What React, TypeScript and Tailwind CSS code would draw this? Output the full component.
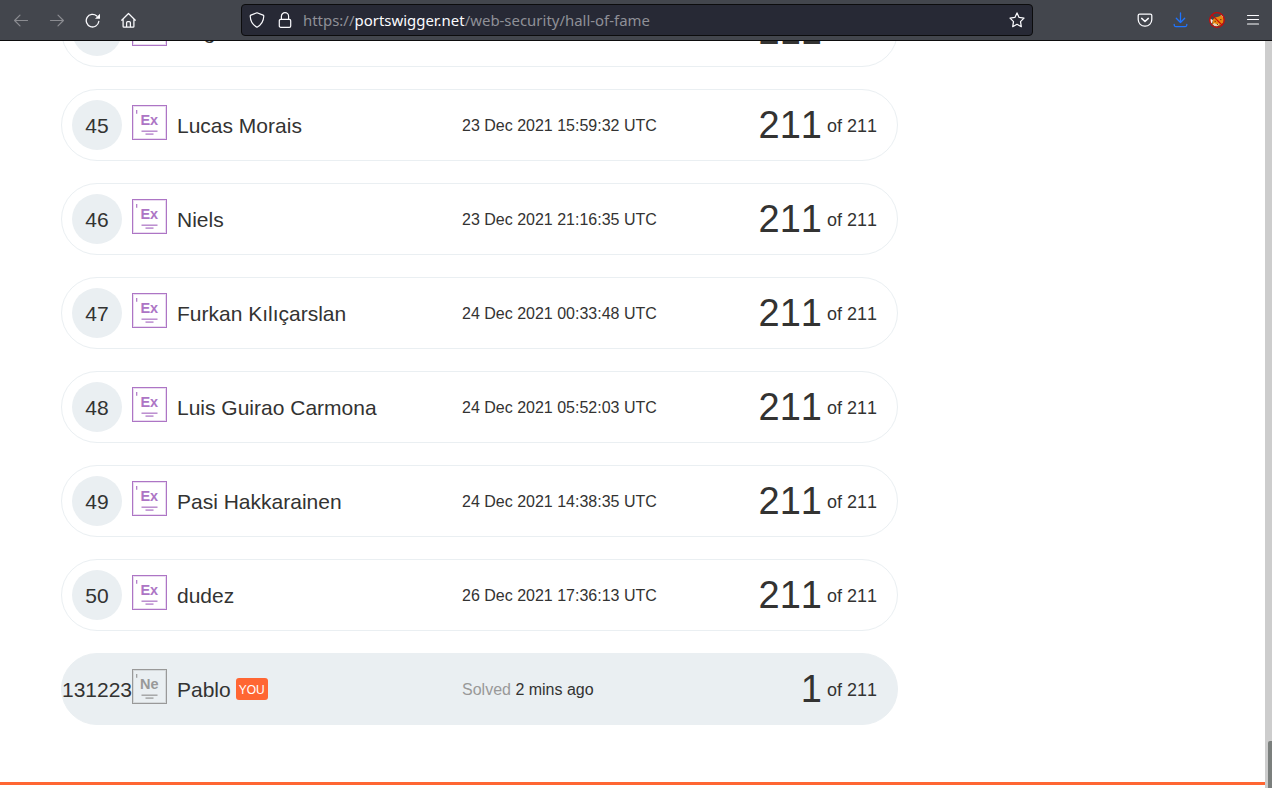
import React from "react";

type Entry = {
  rank: number;
  name: string;
  time: string;
  score: number;
  level: "Ex" | "Ne";
  you?: boolean;
};

const entries: Entry[] = [
  { rank: 44, name: "Reg", time: "23 Dec 2021 12:20:10 UTC", score: 211, level: "Ex" },
  { rank: 45, name: "Lucas Morais", time: "23 Dec 2021 15:59:32 UTC", score: 211, level: "Ex" },
  { rank: 46, name: "Niels", time: "23 Dec 2021 21:16:35 UTC", score: 211, level: "Ex" },
  { rank: 47, name: "Furkan Kılıçarslan", time: "24 Dec 2021 00:33:48 UTC", score: 211, level: "Ex" },
  { rank: 48, name: "Luis Guirao Carmona", time: "24 Dec 2021 05:52:03 UTC", score: 211, level: "Ex" },
  { rank: 49, name: "Pasi Hakkarainen", time: "24 Dec 2021 14:38:35 UTC", score: 211, level: "Ex" },
  { rank: 50, name: "dudez", time: "26 Dec 2021 17:36:13 UTC", score: 211, level: "Ex" },
  { rank: 131223, name: "Pablo", time: "2 mins ago", score: 1, level: "Ne", you: true },
];

function LevelBadge({ level }: { level: "Ex" | "Ne" }) {
  const color = level === "Ex" ? "#ad75c5" : "#999999";
  return (
    <svg width="35" height="35" viewBox="0 0 35 35" fill="none" className="block shrink-0">
      <rect x="0.5" y="0.5" width="34" height="34" stroke={color} />
      <rect x="1.5" y="1.5" width="32" height="32" stroke={color} strokeOpacity="0.25" />
      <path d="M4.7 5v3.7" stroke={color} strokeWidth="1.2" />
      <text x="17.3" y="20" textAnchor="middle" fontSize="14.5" fontWeight="700" fill={color}>
        {level}
      </text>
      <path d="M9.5 26.2h16" stroke={color} strokeWidth="1.4" strokeOpacity="0.9" />
      <path d="M13.5 29.1h8" stroke={color} strokeWidth="1.4" strokeOpacity="0.9" />
    </svg>
  );
}

function Row({ entry }: { entry: Entry }) {
  return (
    <li
      className={`flex h-[72px] w-[837px] shrink-0 items-center rounded-full border border-[#eaeff2] ${
        entry.you ? "bg-[#eaeff2]" : "bg-white"
      }`}
    >
      <div className="flex w-[70px] shrink-0 justify-center">
        <div className="flex h-[50px] w-[50px] shrink-0 items-center justify-center rounded-full bg-[#eaeff2] pt-0.5 text-[21px]">
          {entry.rank}
        </div>
      </div>
      <div className="pb-[5px]">
        <LevelBadge level={entry.level} />
      </div>
      <div className="mr-[10px] flex w-[285px] items-center pt-0.5 pl-2.5 text-[21px] whitespace-nowrap">
        {entry.name}
        {entry.you && (
          <span className="-mt-[3px] ml-[5px] flex h-[22px] w-8 items-center justify-center rounded-[3px] bg-[#ff6633] pt-0.5 text-[12px] text-white">
            YOU
          </span>
        )}
      </div>
      <div className="flex-1 pt-0.5 text-[16px] whitespace-pre">
        {entry.you && <span className="text-[#999999]">Solved </span>}
        {entry.time}
      </div>
      <div className="flex items-center gap-[5px] pr-[20px] [font-kerning:none]">
        <span className="text-[38px] leading-[44px]">{entry.score}</span>
        <span className="pt-0.5 text-[18px] leading-[22px]">of 211</span>
      </div>
    </li>
  );
}

function Toolbar() {
  return (
    <header className="flex h-[41px] shrink-0 items-center border-b border-[#0c0c0d] bg-[#43464d] text-[#fbfbfe]">
      <nav className="flex w-[241px] items-center gap-5 pl-[13px]">
        <svg width="16" height="16" viewBox="0 0 16 16" fill="none" stroke="#8b8c91" strokeWidth="1.2" strokeLinecap="round" strokeLinejoin="round">
          <path d="M14.5 8.5H1.6M7 3.1L1.6 8.5 7 13.9" />
        </svg>
        <svg width="16" height="16" viewBox="0 0 16 16" fill="none" stroke="#8b8c91" strokeWidth="1.2" strokeLinecap="round" strokeLinejoin="round">
          <path d="M1.5 8.5h12.9M9 3.1l5.4 5.4L9 13.9" />
        </svg>
        <svg width="16" height="16" viewBox="0 0 16 16" fill="none" stroke="currentColor" strokeWidth="1.3" strokeLinecap="round">
          <path d="M13.8 9.5A6.3 6.3 0 1 1 11.8 4" />
          <path d="M15 1.7v5H10z" fill="currentColor" stroke="none" />
        </svg>
        <svg width="16" height="16" viewBox="0 0 16 16" fill="none" stroke="currentColor" strokeWidth="1.25" strokeLinecap="round" strokeLinejoin="round">
          <path d="M.7 8.2L7.5 1.5l6.8 6.7M2.1 7v7.4c0 .5.3.8.8.8h9.2c.5 0 .8-.3.8-.8V7M5.6 15v-4.3c0-.6.4-1 1-1h1.8c.6 0 1 .4 1 1V15" />
        </svg>
      </nav>
      <div className="flex h-8 w-[792px] items-center rounded-[4px] border border-[#0c0c0d] bg-[#272935] px-[7px]">
        <svg width="16" height="16" viewBox="0 0 16 16" fill="none" stroke="currentColor" strokeWidth="1.2" strokeLinejoin="round" className="shrink-0">
          <path d="M8 .8l6.1 2.3c.5.2.7.5.7 1C14.6 9.2 12.4 13 8 15.3 3.6 13 1.4 9.2 1.2 4.1c0-.5.2-.8.7-1z" />
        </svg>
        <svg width="16" height="16" viewBox="0 0 16 16" fill="none" stroke="currentColor" strokeWidth="1.2" className="ml-3 shrink-0">
          <rect x="2.3" y="7.3" width="11.4" height="8" rx="1.4" />
          <path d="M4.4 7.2V4.3a3.6 3.6 0 0 1 7.2 0v2.9" />
        </svg>
        <div className="ml-[10px] flex-1 font-['Noto_Sans',sans-serif] text-[14.95px] leading-5 whitespace-nowrap text-[#8f9097]">
          https://<span className="text-[#fbfbfe]">portswigger.net</span>/web-security/hall-of-fame
        </div>
        <svg width="16" height="16" viewBox="0 0 16 16" fill="none" stroke="currentColor" strokeWidth="1.25" strokeLinejoin="round">
          <path d="M8 .9l2.1 4.5 4.9.7-3.5 3.5.8 5.1L8 12.3l-4.3 2.4.8-5.1L1 6.1l4.9-.7z" />
        </svg>
      </div>
      <div className="ml-auto flex items-center gap-5 pr-[11px]">
        <svg width="16" height="16" viewBox="0 0 16 16" fill="none" stroke="currentColor" strokeWidth="1.25" strokeLinecap="round" strokeLinejoin="round">
          <path d="M2.6 2.2h10.8c.8 0 1.4.6 1.4 1.4v4A6.6 6.6 0 0 1 8 14.2a6.6 6.6 0 0 1-6.8-6.6v-4c0-.8.6-1.4 1.4-1.4z" />
          <path d="M4.7 6.4L8 9.5l3.3-3.1" strokeWidth="1.5" />
        </svg>
        <svg width="16" height="16" viewBox="0 0 16 16" fill="none" stroke="#1f74ff" strokeWidth="1.3" strokeLinecap="round" strokeLinejoin="round">
          <path d="M7.5.8v9.7M3.3 6.3l4.2 4.2 4.2-4.2M1.2 12.5v.6c0 .9.7 1.5 1.5 1.5h9.6c.9 0 1.5-.6 1.5-1.5v-.6" />
        </svg>
        <svg width="16" height="16" viewBox="0 0 16 16" fill="none">
          <path d="M3.5 8l2.5-2.6 4.2-1L12 3l2.8 1.5-.2 5.500-2.600 3-4.500 1.500-4-1.700z" fill="#e8860f" />
          <path d="M1.300 6.500L3.800 8.200 2.800 11.500 1.300 9.500zM12 2.600l2.200 1.200-.5 1.700z" fill="#f8eee4" />
          <path d="M3.600 12.200l2-1.200 2 1.300 3-.8-2 2.500-3 .2z" fill="#e3d5bf" />
          <path d="M5.500 9.300h1.500M11 7.600h1.500M8 12.500h1" stroke="#713a16" />
          <circle cx="8" cy="8" r="7.300" stroke="#cc0909" strokeWidth="1.300" />
          <path d="M2.900 2.900l10.200 10.200" stroke="#cc0909" strokeWidth="1.300" />
        </svg>
        <svg width="16" height="16" viewBox="0 0 16 16" fill="none" stroke="currentColor" strokeWidth="1.2" strokeLinecap="round">
          <path d="M2.5 3.5h11M2.5 7.5h11M2.5 12h11" />
        </svg>
      </div>
    </header>
  );
}

export default function App() {
  return (
    <div className="flex h-[788px] w-[1272px] flex-col overflow-hidden bg-white font-['Liberation_Sans',sans-serif] text-[#333332]">
      <Toolbar />
      <div className="flex min-h-0 flex-1">
        <main className="flex flex-1 flex-col overflow-hidden">
          <ul className="-mt-[46px] ml-[61px] flex flex-col gap-[22px]">
            {entries.map((entry) => (
              <Row key={entry.rank} entry={entry} />
            ))}
          </ul>
          <div className="mt-[57px] h-[3px] shrink-0 bg-[#ff6633]" />
        </main>
        <div className="flex w-[7px] items-end justify-end bg-[#cdcdcd]">
          <div className="h-[47px] w-1 rounded-tl-[2px] bg-[#7b7f7d]" />
        </div>
      </div>
    </div>
  );
}
